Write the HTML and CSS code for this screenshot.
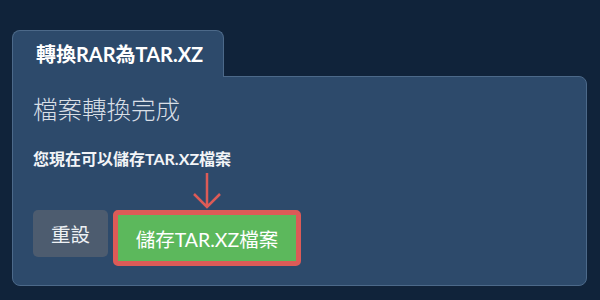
FILE: index.html
```html
<!DOCTYPE html>
<html lang="zh-Hant">
<head>
    <meta charset="UTF-8">
    <meta name="viewport" content="width=device-width, initial-scale=1.0">
    <title>轉換RAR為TAR.XZ</title>
    <link rel="stylesheet" href="styles.css">
</head>
<body>
    <!-- Tab header -->
    <div class="tab">轉換RAR為TAR.XZ</div>

    <!-- Result panel -->
    <div class="panel">
        <h2 class="panel-title">檔案轉換完成</h2>
        <p class="panel-text">您現在可以儲存TAR.XZ檔案</p>

        <div class="actions">
            <button class="btn btn-reset">重設</button>
            <div class="save-wrap">
                <svg class="hint-arrow" width="30" height="38" viewBox="0 0 30 38">
                    <path d="M15 1 V35 M2 22 L15 35 L28 22" fill="none" stroke="#dc5b57" stroke-width="2.5"/>
                </svg>
                <button class="btn btn-save">儲存TAR.XZ檔案</button>
            </div>
        </div>
    </div>
</body>
</html>
```

FILE: styles.css
```css
/* General Reset */
* {
    margin: 0;
    padding: 0;
    box-sizing: border-box;
}

body {
    font-family: 'Lato', 'Noto Sans CJK TC', sans-serif;
    background: #10233a;
    color: #fff;
    padding: 30px 0 0 12px;
}

/* Tab */
.tab {
    position: relative;
    z-index: 1;
    width: 212px;
    height: 47px;
    margin-bottom: -1px;
    padding: 9px 0 0 23px;
    background: #2d4a6b;
    border: 1px solid #4c6989;
    border-bottom: none;
    border-radius: 8px 8px 0 0;
    font-size: 20px;
    font-weight: bold;
    line-height: 28px;
}

/* Panel */
.panel {
    width: 575px;
    height: 210px;
    padding: 17px 20px 0;
    background: #2d4a6b;
    border: 1px solid #4c6989;
    border-radius: 0 8px 8px 8px;
}

.panel-title {
    font-size: 24.5px;
    font-weight: 300;
    line-height: 32px;
    color: #d9dfe6;
}

.panel-text {
    margin-top: 22px;
    font-size: 16px;
    font-weight: bold;
    line-height: 22px;
    color: #f2f4f7;
}

.actions {
    display: flex;
    align-items: flex-start;
    gap: 5px;
    margin-top: 40px;
}

.btn {
    font-family: inherit;
    font-size: 19.5px;
    color: #fff;
    border: none;
    border-radius: 5px;
    cursor: pointer;
}

.btn-reset {
    width: 75px;
    height: 47px;
    background: #4d5c6f;
    color: #eef1f4;
}

.save-wrap {
    position: relative;
}

.hint-arrow {
    position: absolute;
    left: 79px;
    top: -38px;
}

.btn-save {
    width: 188px;
    height: 56px;
    background: #5cb85c;
    border: 5px solid #dc5b57;
}
```
